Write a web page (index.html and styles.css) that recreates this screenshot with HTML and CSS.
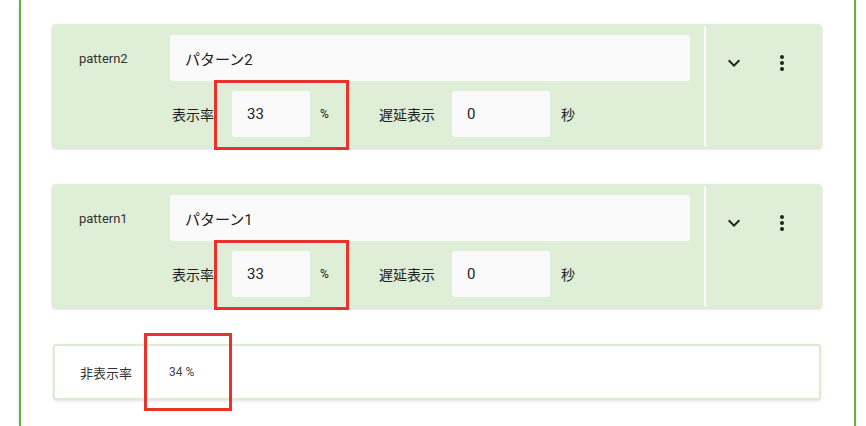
FILE: index.html
```html
<!DOCTYPE html>
<html lang="ja">
<head>
    <meta charset="UTF-8" />
    <title>表示パターン設定</title>
    <link rel="stylesheet" href="styles.css">
</head>
<body>
    <div class="panel">
        <!-- pattern2 -->
        <div class="pattern-card">
            <div class="pattern-main">
                <div class="row">
                    <span class="pattern-name">pattern2</span>
                    <input class="field field-name" type="text" value="パターン2" />
                </div>
                <div class="row row-sub">
                    <span class="sub-label">表示率</span>
                    <input class="field field-small" type="text" value="33" />
                    <span class="unit unit-pct">%</span>
                    <span class="sub-label delay-label">遅延表示</span>
                    <input class="field field-delay" type="text" value="0" />
                    <span class="unit">秒</span>
                </div>
            </div>
            <div class="pattern-actions">
                <button class="icon-btn" aria-label="開く">
                    <svg width="24" height="24" viewBox="0 0 24 24"><path d="M7.41 8.59 12 13.17l4.59-4.58L18 10l-6 6-6-6z" fill="#222"/></svg>
                </button>
                <button class="icon-btn" aria-label="メニュー">
                    <svg width="24" height="24" viewBox="0 0 24 24"><circle cx="12" cy="6" r="2" fill="#222"/><circle cx="12" cy="12" r="2" fill="#222"/><circle cx="12" cy="18" r="2" fill="#222"/></svg>
                </button>
            </div>
            <div class="mark mark-rate"></div>
        </div>

        <!-- pattern1 -->
        <div class="pattern-card">
            <div class="pattern-main">
                <div class="row">
                    <span class="pattern-name">pattern1</span>
                    <input class="field field-name" type="text" value="パターン1" />
                </div>
                <div class="row row-sub">
                    <span class="sub-label">表示率</span>
                    <input class="field field-small" type="text" value="33" />
                    <span class="unit unit-pct">%</span>
                    <span class="sub-label delay-label">遅延表示</span>
                    <input class="field field-delay" type="text" value="0" />
                    <span class="unit">秒</span>
                </div>
            </div>
            <div class="pattern-actions">
                <button class="icon-btn" aria-label="開く">
                    <svg width="24" height="24" viewBox="0 0 24 24"><path d="M7.41 8.59 12 13.17l4.59-4.58L18 10l-6 6-6-6z" fill="#222"/></svg>
                </button>
                <button class="icon-btn" aria-label="メニュー">
                    <svg width="24" height="24" viewBox="0 0 24 24"><circle cx="12" cy="6" r="2" fill="#222"/><circle cx="12" cy="12" r="2" fill="#222"/><circle cx="12" cy="18" r="2" fill="#222"/></svg>
                </button>
            </div>
            <div class="mark mark-rate"></div>
        </div>

        <!-- hidden rate summary -->
        <div class="hidden-card">
            <span class="pattern-name">非表示率</span>
            <span class="hidden-value">34 %</span>
            <div class="mark mark-hidden"></div>
        </div>
    </div>
</body>
</html>
```

FILE: styles.css
```css
body {
    margin: 0;
    background: #fff;
    font-family: Roboto, "Noto Sans CJK JP", sans-serif;
    color: #333;
    overflow: hidden;
}

.panel {
    margin-left: 19px;
    width: 837px;
    height: 426px;
    border-left: 2px solid #62b23f;
    border-right: 2px solid #62b23f;
    box-shadow: -1px 0 2px rgba(0, 0, 0, 0.06), 1px 0 2px rgba(0, 0, 0, 0.06);
    padding: 24px 32px 0 31px;
    box-sizing: border-box;
}

.pattern-card {
    position: relative;
    display: flex;
    height: 124px;
    background: #dfeed6;
    border-radius: 4px;
    box-shadow: 0 1px 3px rgba(0, 0, 0, 0.18);
    margin-bottom: 36px;
}

.pattern-main {
    width: 638px;
    padding: 11px 14px 0 0;
    border-right: 2px solid #fff;
    margin: 2px 0;
    box-sizing: content-box;
}

.pattern-main .row {
    display: flex;
    align-items: center;
    margin-top: -2px;
}

.row-sub {
    margin-top: 10px !important;
}

.pattern-name {
    width: 118px;
    padding-left: 27px;
    box-sizing: border-box;
    font-size: 13px;
    color: #333;
}

.field {
    height: 46px;
    border: none;
    border-radius: 3px;
    background: #fafafa;
    font-family: Roboto, "Noto Sans CJK JP", sans-serif;
    font-size: 15px;
    color: #222;
    padding: 0 15px;
    box-sizing: border-box;
    outline: none;
}

.field-name {
    width: 520px;
}

.sub-label {
    margin-left: 120px;
    width: 60px;
    font-size: 14px;
    color: #222;
}

.field-small {
    width: 78px;
}

.unit {
    margin-left: 11px;
    font-size: 14px;
    color: #222;
}

.unit-pct {
    font-size: 12px;
    width: 46px;
    margin-left: 10px;
}

.delay-label {
    margin-left: 13px;
    width: 73px;
}

.field-delay {
    width: 98px;
}

.pattern-actions {
    display: flex;
    align-items: flex-start;
    padding: 27px 0 0 16px;
    gap: 24px;
}

.icon-btn {
    width: 24px;
    height: 24px;
    padding: 0;
    border: none;
    background: none;
    display: flex;
}

.hidden-card {
    position: relative;
    display: flex;
    align-items: center;
    height: 56px;
    background: #fff;
    border: 2px solid #dcecd2;
    border-radius: 3px;
    box-shadow: 0 1px 3px rgba(0, 0, 0, 0.12);
    box-sizing: border-box;
    margin-left: 1px;
    width: 768px;
}

.hidden-card .pattern-name {
    width: 114px;
    padding-left: 25px;
}

.hidden-value {
    font-size: 12px;
    color: #444;
}

/* red highlight frames drawn over the rate fields */
.mark {
    position: absolute;
    border: 3px solid #e8322a;
    box-sizing: border-box;
    pointer-events: none;
}

.mark-rate {
    left: 162px;
    top: 56px;
    width: 135px;
    height: 70px;
}

.mark-hidden {
    left: 89px;
    top: -13px;
    width: 88px;
    height: 78px;
}
```
